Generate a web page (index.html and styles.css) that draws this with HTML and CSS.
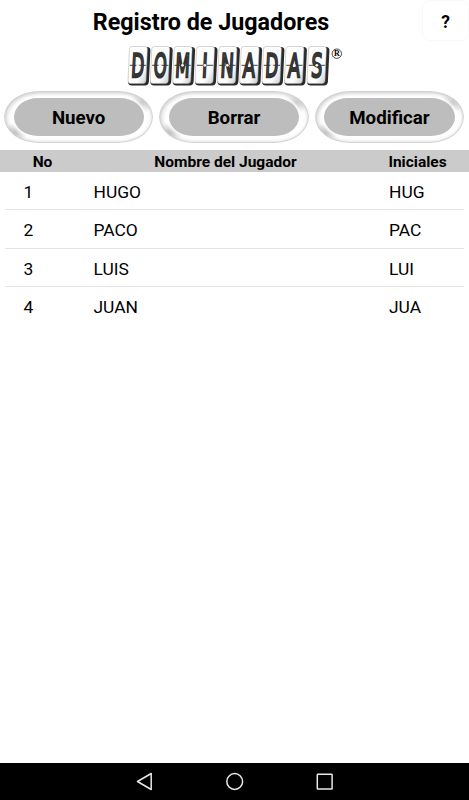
FILE: index.html
```html
<!DOCTYPE html>
<html lang="es">
<head>
<meta charset="utf-8">
<title>Registro de Jugadores</title>
<link rel="stylesheet" href="styles.css">
</head>
<body>
<main class="screen">
  <header class="top">
    <h1>Registro de Jugadores</h1>
    <button class="help">?</button>
  </header>
  <div class="brand">
    <svg class="logo" width="220" height="46" viewBox="125 42 220 46" role="img" aria-label="Dominadas">
      <defs>
        <linearGradient id="face" x1="0" y1="0" x2="1" y2="1">
          <stop offset="0" stop-color="#fff"/><stop offset=".7" stop-color="#fcfcfc"/><stop offset="1" stop-color="#c4c4c4"/>
        </linearGradient>
        <g id="tile">
          <path d="M4.500 1H19Q22.600 1 22.400 4.500L20.900 35.500Q20.600 39.600 17 39.600H3.500Q1 39.500 0 37Z" fill="#2a2a2a"/>
          <path d="M4 .5H17Q19.500 .5 19.400 3L18 34.500Q17.800 37.500 15 37.500H2.500Q-.2 37.500 0 34.500L1.500 3Q1.600 .5 4 .5Z" fill="url(#face)" stroke="#aaa" stroke-width=".5"/>
        </g>
        <g id="split">
          <path d="M1.800 19.300H18" stroke="#333" stroke-width=".9"/>
          <circle cx="9.800" cy="19.300" r="1.400" fill="#f5f5ed"/>
        </g>
      </defs>
      <g>
        <use href="#tile" x="128" y="46"/><use href="#tile" x="150.300" y="46"/><use href="#tile" x="172.700" y="46"/>
        <use href="#tile" x="195.100" y="46"/><use href="#tile" x="217.500" y="46"/><use href="#tile" x="239.700" y="46"/>
        <use href="#tile" x="262" y="46"/><use href="#tile" x="284.500" y="46"/><use href="#tile" x="307" y="46"/>
      </g>
      <g class="letters">
        <text transform="translate(137.200 77.300) skewX(-3) scale(.5 .97)">D</text>
        <text transform="translate(159.700 77.300) skewX(-3) scale(.49 .97)">O</text>
        <text transform="translate(182 77.300) skewX(-3) scale(.5 .97)">M</text>
        <text transform="translate(204.300 77.300) skewX(-3) scale(.55 .97)">I</text>
        <text transform="translate(226.700 77.300) skewX(-3) scale(.53 .97)">N</text>
        <text transform="translate(248.700 77.300) skewX(-3) scale(.53 .97)">A</text>
        <text transform="translate(271.200 77.300) skewX(-3) scale(.5 .97)">D</text>
        <text transform="translate(293.500 77.300) skewX(-3) scale(.53 .97)">A</text>
        <text transform="translate(316.200 77.300) skewX(-3) scale(.52 .97)">S</text>
      </g>
      <g>
        <use href="#split" x="128" y="46"/><use href="#split" x="150.300" y="46"/><use href="#split" x="172.700" y="46"/>
        <use href="#split" x="195.100" y="46"/><use href="#split" x="217.500" y="46"/><use href="#split" x="239.700" y="46"/>
        <use href="#split" x="262" y="46"/><use href="#split" x="284.500" y="46"/><use href="#split" x="307" y="46"/>
      </g>
      <circle cx="336.800" cy="53.700" r="4.700" fill="none" stroke="#333" stroke-width=".9"/>
      <text class="mark" x="336.900" y="56.400">R</text>
    </svg>
  </div>
  <nav class="actions">
    <button class="pill"><span>Nuevo</span></button>
    <button class="pill"><span>Borrar</span></button>
    <button class="pill"><span>Modificar</span></button>
  </nav>
  <div class="head"><span>No</span><span>Nombre del Jugador</span><span>Iniciales</span></div>
  <ul class="rows">
    <li><span>1</span><span>HUGO</span><span>HUG</span></li>
    <li><span>2</span><span>PACO</span><span>PAC</span></li>
    <li><span>3</span><span>LUIS</span><span>LUI</span></li>
    <li><span>4</span><span>JUAN</span><span>JUA</span></li>
  </ul>
  <footer class="navbar">
    <svg width="469" height="37" viewBox="0 763 469 37" fill="none" stroke="#e8e8e8" stroke-width="1.500" stroke-linejoin="round">
      <path d="M151.200 773.500V789.500L137.500 781.500Z"/>
      <circle cx="234.700" cy="781.500" r="7.900"/>
      <rect x="317.300" y="774.300" width="14.800" height="14.800" rx=".6"/>
    </svg>
  </footer>
</main>
</body>
</html>
```
FILE: styles.css
```css
* { box-sizing: border-box; }
body { margin: 0; background: #fff; color: #000; font-family: Roboto, sans-serif; }
button { border: 0; padding: 0; font: inherit; color: inherit; }
.screen { width: 469px; height: 800px; display: flex; flex-direction: column; }
.top { height: 42px; display: grid; grid-template-columns: 422px 47px; }
.top h1 { margin: 0; text-align: center; font-size: 23.3px; line-height: 44px; font-weight: 700; }
.help { height: 41px; padding-top: 2px; border: 1px solid #f9f9f9; border-radius: 8px; background: #fff; font-weight: 700; font-size: 17.5px; }
.brand { height: 46px; padding-left: 125px; }
.logo { display: block; }
.letters { font-family: "DejaVu Sans", sans-serif; font-size: 33.5px; text-anchor: middle; fill: #4a4a4a; stroke: #333; stroke-width: 2.4px; }
.mark { font-family: "Liberation Serif", serif; font-size: 8px; font-weight: 700; text-anchor: middle; }
.actions { height: 62px; padding: 3px 4px 0; display: grid; grid-template-columns: repeat(3, 149.3px); column-gap: 6.1px; }
.pill {
  height: 52px; padding: 7px 9.5px; border-radius: 36px / 27px;
  background:
    radial-gradient(ellipse 14px 10px at 137px 12px, #c8c8c8, transparent),
    radial-gradient(ellipse 14px 10px at 10px 42px, #bebebe, transparent),
    #fff;
  box-shadow: inset 0 0 1px 1px #d2d2d2, inset 1px 1px 5px 1px #c8c8c8;
}
.pill span { display: flex; height: 38px; padding-top: 2px; align-items: center; justify-content: center; border-radius: 24px / 19px; background: #bdbdbd; font-size: 18.7px; font-weight: 700; box-shadow: 0 0 3px 2px #fff; }
.head, .rows li { display: grid; }
.head { height: 22px; grid-template-columns: 85px 281px 103px; background: #cbcbcb; text-align: center; font-size: 15.5px; line-height: 24px; font-weight: 700; }
.rows { list-style: none; margin: 0; padding: 0 5px; flex: 1; }
.rows li { height: 38.4px; grid-template-columns: 70px 295.500px 1fr; padding-left: 18.500px; border-bottom: 1px solid #e4e4e4; font-size: 17.4px; line-height: 40px; }
.rows li:last-child { border: 0; }
.navbar { height: 37px; background: #000; }
.navbar svg { display: block; }
```
